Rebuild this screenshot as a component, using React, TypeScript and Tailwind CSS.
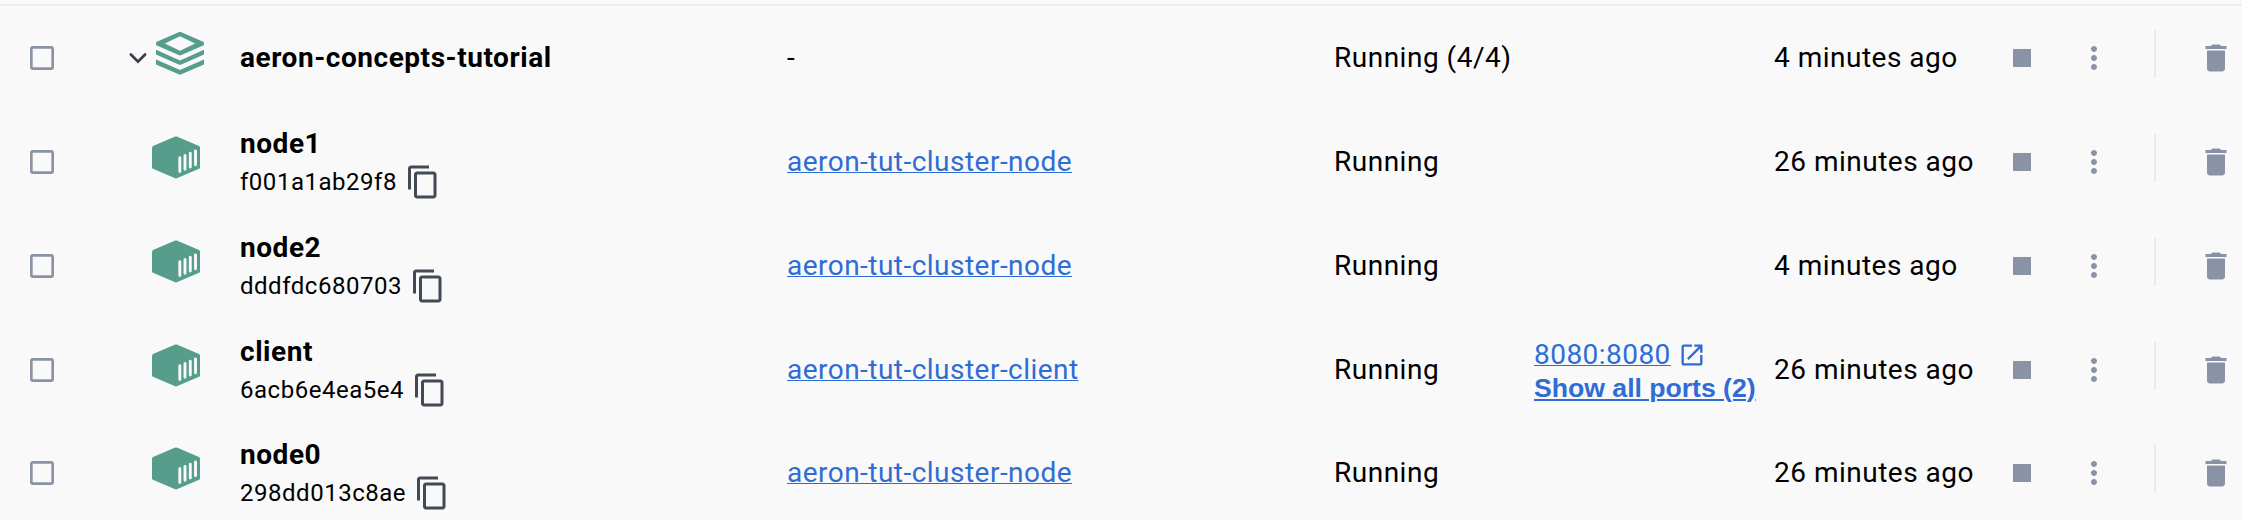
type Container = {
  name: string;
  id?: string;
  image?: string;
  status: string;
  port?: string;
  morePorts?: string;
  started: string;
};

const containers: Container[] = [
  { name: "aeron-concepts-tutorial", status: "Running (4/4)", started: "4 minutes ago" },
  { name: "node1", id: "f001a1ab29f8", image: "aeron-tut-cluster-node", status: "Running", started: "26 minutes ago" },
  { name: "node2", id: "dddfdc680703", image: "aeron-tut-cluster-node", status: "Running", started: "4 minutes ago" },
  {
    name: "client",
    id: "6acb6e4ea5e4",
    image: "aeron-tut-cluster-client",
    status: "Running",
    port: "8080:8080",
    morePorts: "Show all ports (2)",
    started: "26 minutes ago",
  },
  { name: "node0", id: "298dd013c8ae", image: "aeron-tut-cluster-node", status: "Running", started: "26 minutes ago" },
];

function Glyph({ d, className }: { d: string; className: string }) {
  return (
    <svg viewBox="0 0 24 24" fill="currentColor" className={className}>
      <path d={d} />
    </svg>
  );
}

const CHECKBOX = "M19 5v14H5V5h14m0-2H5c-1.1 0-2 .9-2 2v14c0 1.1.9 2 2 2h14c1.1 0 2-.9 2-2V5c0-1.1-.9-2-2-2z";
const COPY =
  "M16 1H4c-1.1 0-2 .9-2 2v14h2V3h12V1zm3 4H8c-1.1 0-2 .9-2 2v14c0 1.1.9 2 2 2h11c1.1 0 2-.9 2-2V7c0-1.1-.9-2-2-2zm0 16H8V7h11v14z";
const OPEN =
  "M19 19H5V5h7V3H5c-1.11 0-2 .9-2 2v14c0 1.1.89 2 2 2h14c1.1 0 2-.9 2-2v-7h-2v7zM14 3v2h3.59l-9.83 9.83 1.41 1.41L19 6.41V10h2V3h-7z";
const MORE =
  "M12 8c1.1 0 2-.9 2-2s-.9-2-2-2-2 .9-2 2 .9 2 2 2zm0 2c-1.1 0-2 .9-2 2s.9 2 2 2 2-.9 2-2-.9-2-2-2zm0 6c-1.1 0-2 .9-2 2s.9 2 2 2 2-.9 2-2-.9-2-2-2z";
const TRASH = "M6 19c0 1.1.9 2 2 2h8c1.1 0 2-.9 2-2V7H6v12zM19 4h-3.5l-1-1h-5l-1 1H5v2h14V4z";

function StackIcon() {
  return (
    <svg viewBox="0 0 48 44" fill="currentColor" className="h-11 w-12">
      <path
        fillRule="evenodd"
        d="M22.6 1.2Q24 .5 25.4 1.2L47.2 10.7Q48 11.1 48 12V13.4Q48 14.2 47.2 14.6L25.4 24.1Q24 24.8 22.6 24.1L.8 14.6Q0 14.2 0 13.4V12Q0 11.1.8 10.7ZM24 5.2 8.8 12.5 24 19.7 39.2 12.5Z"
      />
      <path d="M0 18.8 24 29.4 48 18.8V23.5L25.4 33.5Q24 34.1 22.6 33.5L0 23.5Z" />
      <path d="M0 28.6 24 39 48 28.6V33.4L25.4 43.2Q24 43.8 22.6 43.2L0 33.4Z" />
    </svg>
  );
}

function ContainerIcon() {
  return (
    <svg viewBox="0 0 48 43" className="h-[43px] w-12">
      <path
        fill="currentColor"
        d="M22.6 .7Q24 .1 25.4 .7L47 10Q48 10.5 48 11.5V31.3Q48 32.3 47 32.8L25.4 42.1Q24 42.7 22.6 42.1L1 32.8Q0 32.3 0 31.3V11.5Q0 10.5 1 10Z"
      />
      <path
        d="M27.8 21.8V35.6M33 19.5V33.3M38.3 17.2V31M43.5 15V28.8"
        stroke="#f9f9fa"
        strokeWidth="2.9"
        strokeLinecap="round"
      />
    </svg>
  );
}

function Row({ c }: { c: Container }) {
  return (
    <div className="grid h-[104px] shrink-0 grid-cols-[126px_114px_547px_547px_200px_240px_213px_80px_89px_86px] items-center last:-mt-px">
      <div className="pl-[26px] text-[#8993a5]">
        <Glyph d={CHECKBOX} className="h-8 w-8" />
      </div>
      <div className="flex items-center text-[#569e8b]">
        {c.id ? (
          <div className="mb-2.5 pl-[26px]">
            <ContainerIcon />
          </div>
        ) : (
          <>
            <svg viewBox="0 0 24 24" fill="none" className="ml-px h-6 w-6 text-[#393f49]">
              <path d="M3.9 8.5 11 15.6 18.1 8.5" stroke="currentColor" strokeWidth="2.7" strokeLinecap="round" />
            </svg>
            <div className="mb-2.5 pl-[5px]">
              <StackIcon />
            </div>
          </>
        )}
      </div>
      <div>
        <div className="font-bold leading-10 tracking-[0.55px]">{c.name}</div>
        {c.id && (
          <div className="flex items-center gap-2 text-2xl leading-9 tracking-[0.52px]">
            {c.id}
            <Glyph d={COPY} className="h-9 w-9 text-[#434a56]" />
          </div>
        )}
      </div>
      <div>
        {c.image ? (
          <a className="tracking-[0.475px] text-[#2f6cd4] underline decoration-1 underline-offset-1">{c.image}</a>
        ) : (
          "-"
        )}
      </div>
      <div>{c.status}</div>
      <div className="text-[#2f6cd4]">
        {c.port && (
          <>
            <div className="-mb-px mt-px flex items-center gap-[7px] leading-9">
              <a className="tracking-[0.46px] underline decoration-1 underline-offset-1">{c.port}</a>
              <Glyph d={OPEN} className="h-7 w-7" />
            </div>
            <div className="font-['Liberation_Sans',Arial,sans-serif] text-[26.67px] font-bold leading-8 tracking-[-0.03px] underline decoration-2 underline-offset-2">
              {c.morePorts}
            </div>
          </>
        )}
      </div>
      <div>{c.started}</div>
      <div className="pl-[26px] text-[#8993a5]">
        <div className="h-[18px] w-[18px] bg-current" />
      </div>
      <div className="mb-2 flex h-12 items-center border-r-2 border-[#ebebec] pl-[9px] pt-2 text-[#8993a5]">
        <Glyph d={MORE} className="h-9 w-9" />
      </div>
      <div className="pl-[42px] text-[#8993a5]">
        <Glyph d={TRASH} className="h-9 w-9" />
      </div>
    </div>
  );
}

export default function App() {
  return (
    <div className="flex h-[520px] w-[2242px] flex-col overflow-hidden whitespace-nowrap bg-[#f9f9fa] pt-1 font-['Roboto',sans-serif] text-[28px] leading-10 tracking-[0.5px] text-black">
      <div className="h-0.5 shrink-0 bg-[#eeeef0]" />
      {containers.map((c) => (
        <Row key={c.name} c={c} />
      ))}
    </div>
  );
}
